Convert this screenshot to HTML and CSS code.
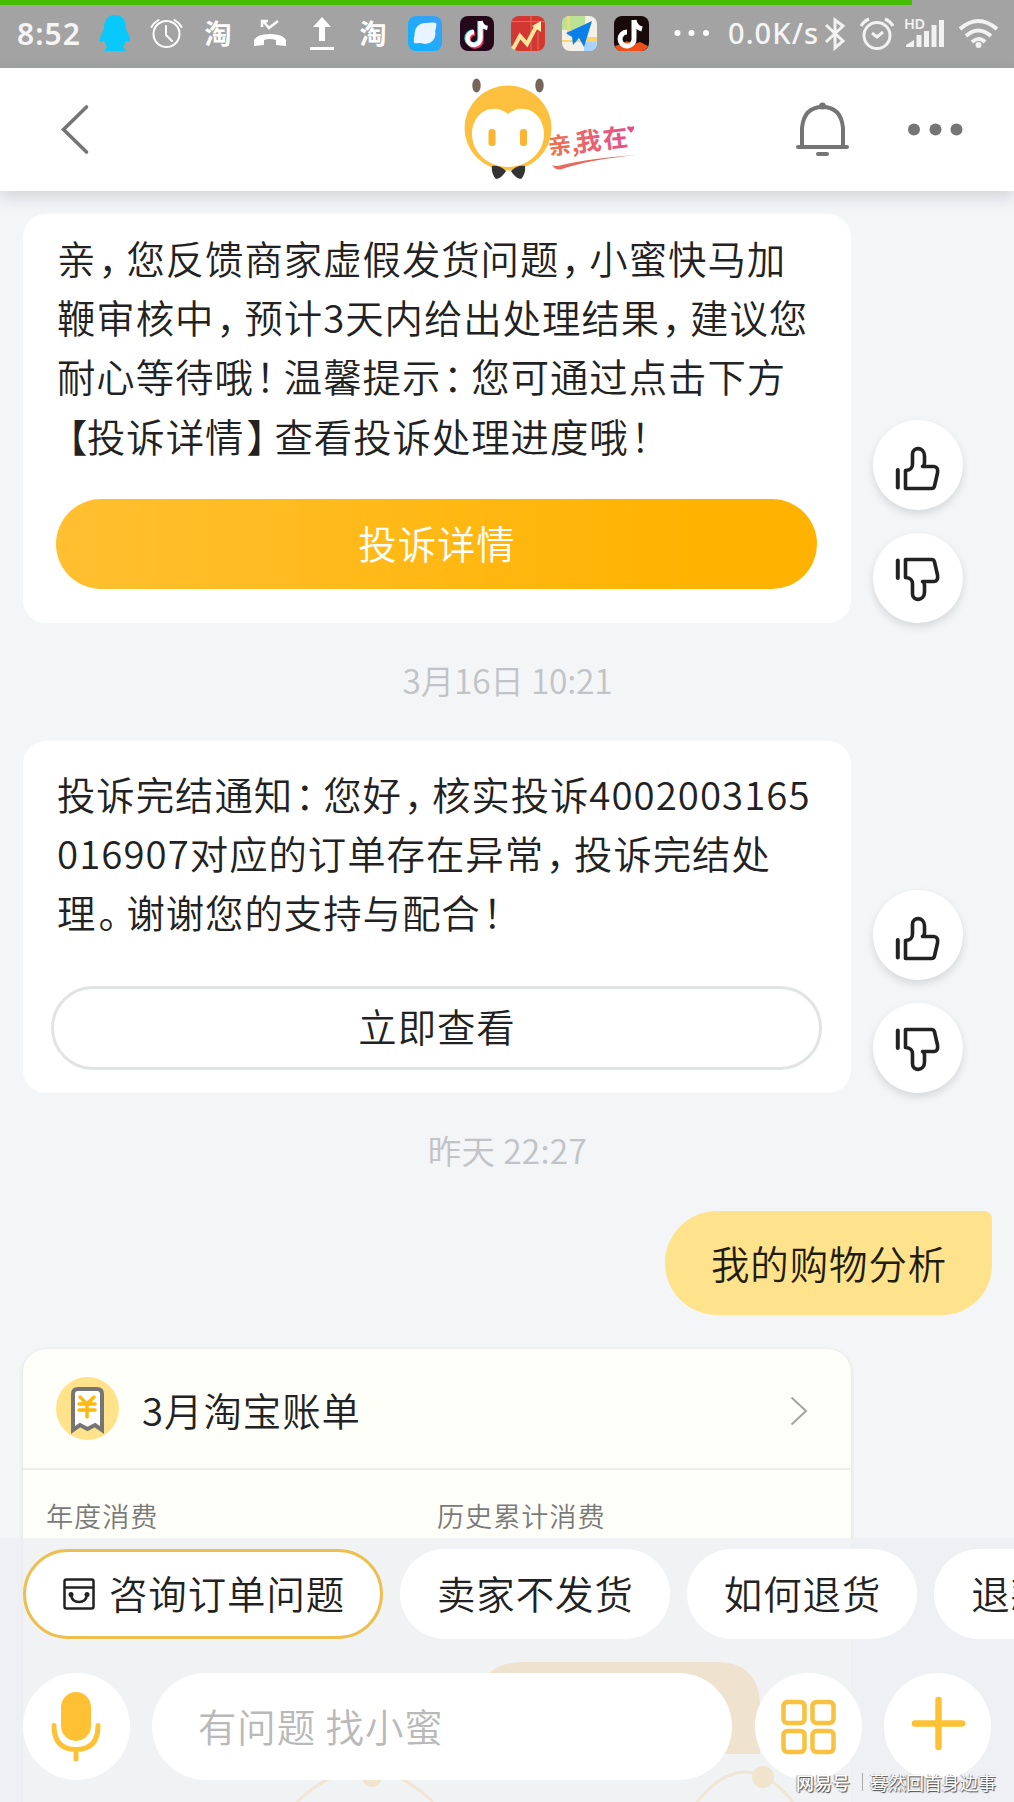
FILE: index.html
```html
<!DOCTYPE html>
<html lang="zh-CN">
<head>
<meta charset="utf-8">
<title>小蜜</title>
<link rel="stylesheet" href="styles.css">
</head>
<body>
<svg class="defs" width="0" height="0">
  <symbol id="thumb" viewBox="0 0 90 90">
    <path d="M24.800 50V67.500" stroke-width="4"/>
    <path d="M32.500 68.500V50.500C38 50 39.500 48 39.500 44V34C39.500 26.500 51.500 26.500 51.500 36V43Q51 46 49.500 46.500H61Q65.500 47 64.500 53L61.500 66Q61 68.500 58.500 68.500Z"/>
  </symbol>
</svg>
<div class="screen">
  <div class="status">
    <div class="progress"></div>
    <svg width="1014" height="68" viewBox="0 0 1014 68">
      <defs>
        <linearGradient id="blue" x1="1" y1="0" x2="0" y2="1"><stop offset="0" stop-color="#3d9ff5"/><stop offset="1" stop-color="#0bb3ff"/></linearGradient>
        <linearGradient id="slogan" x1="0" y1="0" x2="1" y2="0"><stop offset="0" stop-color="#ee7350"/><stop offset="1" stop-color="#e5508c"/></linearGradient>
      </defs>
      <text class="clock" x="17" y="45" textLength="63">8:52</text>
      <path fill="#09c8fb" d="M115 15c-8 0-11 6-11 13 0 4-5 8-4 14l4-1 3 6-3 4h22l-3-4 3-6 4 1c1-6-4-10-4-14 0-7-3-13-11-13z"/>
      <g fill="none" stroke="#fff" stroke-width="2" stroke-linecap="round">
        <circle cx="166.500" cy="34" r="13"/><path d="M166 26v9l6 6M151.500 27q2-4 7-7M181.500 27q-2-4-7-7"/>
      </g>
      <text class="tao" x="204.500" y="43.500">淘</text>
      <path fill="#fff" d="M254 46v-6q3-6 16-6t16 6v6l-10-1v-5q-6-2-12 0v5z"/>
      <path fill="none" stroke="#fff" stroke-width="2.500" d="M263 21l6 7 9-7M262 27v-6h6"/>
      <path fill="#fff" d="M322 17l9 10h-6v14h-6V27h-6zM310 47h24v3h-24z"/>
      <text class="tao" x="359.500" y="43.500">淘</text>
      <rect x="408" y="16" width="34" height="35" rx="8" fill="url(#blue)"/>
      <circle cx="425" cy="33.500" r="10.500" fill="#e8f4ff"/><path fill="#e8f4ff" d="M414 43q-1-3 1-9l11-11q8-1 10 0 1 2-1 9l-10 10q-8 2-11 1z"/>
      <rect x="460" y="16" width="34" height="35" rx="8" fill="#25091a"/>
      <g fill="none" stroke-width="4.500"><path stroke="#20d5d2" d="M479.500 21v16.500a6.500 6.500 0 1 1-6.500-6"/><path stroke="#ef3b66" d="M481.500 23v16.500a6.500 6.500 0 1 1-6.500-6"/><path stroke="#fff" d="M480.500 21v17a6.500 6.500 0 1 1-6.500-6M480.500 21q1 6 7 7"/></g>
      <rect x="511" y="16" width="34" height="35" rx="8" fill="#d23831"/>
      <path fill="none" stroke="#e56a51" d="M511 21.500h34M531 16v35M538 32v18"/>
      <path fill="none" stroke="#ffe49b" stroke-width="4" d="M513 49l7-13 7 8 10-19"/><path fill="#fff0b0" d="M532 26l9-5v11z"/>
      <rect x="562" y="16" width="35" height="35" rx="8" fill="#f4f2e8"/>
      <path fill="#b9e294" d="M570 16h15v8l-12 6h-11v-6q0-8 8-8z"/><path fill="#fbd56e" d="M567 16h3v20h-3zM562 40h22v-3h13v5h-35z"/><path fill="#a9d3ff" d="M584 42h13q0 9-8 9h-5z"/>
      <path fill="#0b7fe9" d="M566 33l26-12-8 26-5-9-6 7-1-8z"/>
      <rect x="614" y="16" width="35" height="35" rx="8" fill="#18090b"/>
      <path fill="#ee501c" d="M615 46l6-2 6-3 7 3 6-2 8 4q-2 5-7 5h-19q-6 0-7-5z"/>
      <path fill="none" stroke="#fff" stroke-width="5" d="M634 20v18a7 7 0 1 1-7-6M634 20q1 7 8 9"/>
      <g fill="#fff"><circle cx="677.500" cy="33" r="3"/><circle cx="691.500" cy="33" r="3"/><circle cx="706" cy="33" r="3"/></g>
      <text class="speed" x="728" y="44" textLength="90">0.0K/s</text>
      <g fill="none" stroke="#f2f2f2" stroke-width="3">
        <path d="M826 25l17 16-8 7V20l8 6-17 16"/>
        <circle cx="877" cy="35.500" r="13"/><path d="M872 33l5 4 6-5M861 26q3-5 8-7M893 26q-3-5-8-7"/>
      </g>
      <text class="hd" x="904" y="29" textLength="21">HD</text>
      <path fill="#f2f2f2" d="M906 47v-2l8-5v7zM916.500 35h5v12h-5zM924 31h5v16h-5zM931.500 25h5v22h-5zM939 20h5v27h-5z"/>
      <g fill="none" stroke="#f2f2f2" stroke-width="4"><path d="M960 29q18-16 37 0M966 36q12-11 25 0M972 42q7-6 13 0"/></g><circle cx="978.500" cy="45" r="3" fill="#f2f2f2"/>
    </svg>
  </div>
  <header class="header">
    <svg width="1014" height="123" viewBox="0 68 1014 123">
      <path d="M86.500 107L63.500 129.500L86.500 152" fill="none" stroke="#757575" stroke-width="3.600" stroke-linecap="round"/>
      <g fill="#75655b"><ellipse cx="476.500" cy="85.500" rx="4.200" ry="7"/><ellipse cx="539.500" cy="85.500" rx="4.200" ry="7"/></g>
      <ellipse cx="508" cy="128" rx="43.500" ry="42.500" fill="#fdc03e"/>
      <path fill="#fff" d="M508 114c-5-4-10-6-16-5-12 1-20 12-20 25 0 19 17 33 36 33s36-14 36-33c0-13-8-24-20-25-6-1-11 1-16 5z"/>
      <g fill="#fbb433"><rect x="488.500" y="129" width="7" height="17" rx="3"/><rect x="520" y="129" width="7" height="17" rx="3"/></g>
      <path fill="#333" d="M492 166q8-1 14 5-4 7-10 8-5-5-4-13zM525 166q-8-1-14 5 4 7 10 8 5-5 4-13z"/>
      <text class="slogan" fill="url(#slogan)" transform="rotate(-7 550 152)"><tspan x="549" y="155" font-size="23">亲,</tspan><tspan x="577" y="155" font-size="25">我</tspan><tspan x="604" y="155" font-size="25">在</tspan></text>
      <path fill="#e5508c" d="M631 133l-4-5q0-3 4-1 4-2 3 2z"/>
      <path fill="#e8685c" d="M552 165q4 2 10 0 30-7 76-10-46 4-76 14-6 2-10-4z"/>
      <g fill="none" stroke="#757575" stroke-width="4" stroke-linecap="round"><path d="M802 146V128q2-21 20.500-21t20.500 21v18M798 147h49M818 154h9"/></g><circle cx="822.500" cy="106" r="3.500" fill="#757575"/>
      <g fill="#757575"><circle cx="914" cy="129.500" r="6"/><circle cx="935.500" cy="129.500" r="6"/><circle cx="956.500" cy="129.500" r="6"/></g>
    </svg>
  </header>
  <main class="chat">
    <div class="row first">
      <section class="card">
        <p class="msg"><span>亲<i>，</i>您反馈商家虚假发货问题<i>，</i>小蜜快马加</span><span>鞭审核中<i>，</i>预计3天内给出处理结果<i>，</i>建议您</span><span>耐心等待哦<i>！</i>温馨提示<i>：</i>您可通过点击下方</span><span><b>【</b>投诉详情<i>】</i>查看投诉处理进度哦<i>！</i></span></p>
        <button class="btn primary">投诉详情</button>
      </section>
      <div class="votes">
        <button class="vote"><svg viewBox="0 0 90 90"><use href="#thumb"/></svg></button>
        <button class="vote down"><svg viewBox="0 0 90 90"><use href="#thumb"/></svg></button>
      </div>
    </div>
    <time class="time t1">3月16日 10:21</time>
    <div class="row second">
      <section class="card">
        <p class="msg"><span>投诉完结通知<i>：</i>您好<i>，</i>核实投诉<em>4002003165</em></span><span><em>016907</em>对应的订单存在异常<i>，</i>投诉完结处</span><span>理<i>。</i>谢谢您的支持与配合<i>！</i></span></p>
        <button class="btn outline">立即查看</button>
      </section>
      <div class="votes">
        <button class="vote"><svg viewBox="0 0 90 90"><use href="#thumb"/></svg></button>
        <button class="vote down"><svg viewBox="0 0 90 90"><use href="#thumb"/></svg></button>
      </div>
    </div>
    <time class="time t2">昨天 22:27</time>
    <div class="mine">我的购物分析</div>
    <section class="bill">
      <div class="bill-head">
        <svg width="63" height="63" viewBox="0 0 63 63"><circle cx="31.500" cy="31.500" r="31.500" fill="#ffe28a"/><path d="M17 53V17q0-5 5-5h19q5 0 5 5v36l-7-5-7.500 4-7.500-4z" fill="#fff" stroke="#757575" stroke-width="4"/><path d="M24 20l7 7 7-7M23 27h16M23 33h16M31 27v13" fill="none" stroke="#fdb913" stroke-width="3.500" stroke-linecap="round"/></svg>
        <span>3月淘宝账单</span>
        <svg class="arrow" width="18" height="30" viewBox="0 0 18 30"><path d="M1.500 1.500L16 15L1.500 28.500" fill="none" stroke="#a3a3a0" stroke-width="2"/></svg>
      </div>
      <div class="bill-cols"><span>年度消费</span><span>历史累计消费</span></div>
      <svg class="bill-art" width="828" height="264" viewBox="23 1538 828 264">
        <path d="M478 1754V1707q0-45 45-45H716q44 0 44 45v47z" fill="#f6b040"/>
        <g fill="none" stroke="#f6c15c" stroke-width="3"><path d="M297 1802Q365 1737 433 1802M697 1802Q745 1742 793 1802"/></g>
        <g fill="#f8b838"><circle cx="372" cy="1777" r="10"/><circle cx="763" cy="1777" r="11"/></g>
      </svg>
    </section>
  </main>
  <footer class="dock">
    <div class="chips">
      <button class="chip active"><svg width="32" height="32" viewBox="0 0 32 32"><g fill="none" stroke="#222" stroke-width="2.500" stroke-linecap="round"><rect x="1.500" y="1.500" width="29" height="29" rx="2"/><path d="M2 9.500h28M8 17q1 7 8 7t8-7"/></g><g fill="#222"><circle cx="8" cy="16.500" r="2.500"/><circle cx="24" cy="16.500" r="2.500"/></g></svg><span>咨询订单问题</span></button>
      <button class="chip"><span>卖家不发货</span></button>
      <button class="chip"><span>如何退货</span></button>
      <button class="chip"><span>退款</span></button>
    </div>
    <div class="bar">
      <button class="round"><svg viewBox="0 0 107 107"><rect x="38" y="19" width="30" height="49" rx="15" fill="#fec134"/><path d="M31 52.500q0 24 22 24t22-24M53 77v9" fill="none" stroke="#fec134" stroke-width="5" stroke-linecap="round"/></svg></button>
      <div class="input">有问题 找小蜜</div>
      <button class="round"><svg viewBox="0 0 107 107"><g fill="none" stroke="#f8c140" stroke-width="4.500"><rect x="28.500" y="29" width="21" height="21" rx="4"/><rect x="57.500" y="29" width="21" height="21" rx="4"/><rect x="28.500" y="58" width="21" height="21" rx="4"/><rect x="57.500" y="58" width="21" height="21" rx="4"/></g></svg></button>
      <button class="round"><svg viewBox="0 0 107 107"><path d="M31 50.500h47M54.500 27v47" stroke="#fec134" stroke-width="6.500" stroke-linecap="round"/></svg></button>
    </div>
  </footer>
  <div class="watermark"><strong>网易号</strong><span>蓦然回首身边事</span></div>
</div>
</body>
</html>
```

FILE: styles.css
```css
* { box-sizing: border-box; }
body { margin: 0; background: #f3f5f7; font-family: "Noto Sans CJK SC", sans-serif; font-weight: 350; color: #222; }
button { border: 0; padding: 0; margin: 0; font: inherit; color: inherit; background: #fff; }
svg { display: block; flex: none; }
.defs { position: absolute; }
.screen { position: relative; width: 1014px; height: 1802px; overflow: hidden; display: flex; flex-direction: column; }

.status { position: relative; height: 68px; flex: none; background: #a3a3a3; }
.progress { position: absolute; left: 0; top: 0; width: 912px; height: 5px; background: #44bd04; }
.clock { font: 600 30px "Noto Sans", sans-serif; fill: #f5f5f5; }
.tao { font: 700 27px "Noto Sans CJK SC", sans-serif; fill: #fff; }
.speed { font: 500 29px "Noto Sans", sans-serif; fill: #f5f5f5; }
.hd { font: 600 14.500px "Noto Sans", sans-serif; fill: #f2f2f2; }
.header { position: relative; z-index: 1; height: 123px; flex: none; background: #fff; box-shadow: 0 6px 16px rgba(30, 35, 45, .16); }
.slogan { font-weight: 700; font-family: "Noto Sans CJK SC", sans-serif; }

.chat { flex: 1; min-height: 0; overflow: hidden; padding: 23px 22px 0 23px; display: flex; flex-direction: column; }
.row { display: flex; gap: 22px; align-items: flex-end; flex: none; }
.card { width: 828px; background: #fff; border-radius: 23px; display: flex; flex-direction: column; }
.first .card { height: 409px; padding: 14px 34px 34px 33px; }
.second .card { height: 352px; padding: 23px 29px 23px 28px; }
.msg { margin: 0; padding-left: 1px; font-size: 38.400px; letter-spacing: .970px; line-height: 59.200px; }
.second .msg { padding-left: 6px; }
.msg span { display: block; white-space: nowrap; }
.msg i { font-style: normal; margin-left: 2px; letter-spacing: -10.400px; }
.msg b { font-weight: inherit; margin-left: -8px; letter-spacing: -.400px; }
.msg em { font-style: normal; letter-spacing: 1.050px; }
.btn { margin-top: auto; font-size: 38.400px; letter-spacing: .970px; line-height: 80px; padding: 0 0 5px 1px; border-radius: 46px; }
.primary { height: 90px; color: #fff; background: linear-gradient(90deg, #ffc031, #ffb300 85%); }
.outline { height: 84px; line-height: 73px; border: 3px solid #e2e3e5; }
.votes { display: flex; flex-direction: column; gap: 23px; }
.vote { width: 90px; height: 90px; border-radius: 50%; box-shadow: 0 4px 8px rgba(0, 0, 0, .12); }
.vote svg { fill: none; stroke: #222; stroke-width: 3.600px; stroke-linejoin: round; stroke-linecap: round; }
.down svg { transform: translateY(5px) scaleY(-1); }
.time { align-self: center; flex: none; color: #c1c3c6; font-size: 33.500px; line-height: 48px; }
.t1 { margin: 33px 0 37px; letter-spacing: -.2px; }
.t2 { margin: 33px 0 37px; letter-spacing: .3px; }
.mine { align-self: flex-end; flex: none; width: 327px; height: 104px; line-height: 102px; padding-left: 46px; font-size: 38.400px; letter-spacing: .970px; color: #211c0c; background: #ffe38c; border-radius: 52px 8px 50px 52px; }
.bill { width: 828px; height: 460px; margin-top: 34px; flex: none; background: #fffffa; border-radius: 23px 23px 0 0; box-shadow: 0 1px 4px rgba(0, 0, 0, .12); }
.bill-head { height: 121px; display: flex; align-items: center; padding: 0 43px 0 33px; border-bottom: 2px solid #eeeeea; font-size: 38.400px; letter-spacing: .970px; }
.bill-head span { flex: 1; margin-left: 23px; }
.arrow { margin-top: 4px; }
.bill-cols { display: grid; grid-template-columns: 391px 1fr; height: 68px; padding: 25px 24px 0 23px; line-height: 40px; font-size: 27.200px; letter-spacing: .900px; color: #7a7a78; }

.dock { position: absolute; inset: auto 0 0 0; height: 264px; padding: 11px 0 0 23px; background: rgba(237, 239, 242, .8); }
.chips { display: flex; gap: 17px; overflow: hidden; }
.chip { flex: none; height: 90px; padding: 0 36px 0 37px; border-radius: 45px; font-size: 38.400px; letter-spacing: .970px; display: flex; align-items: center; white-space: nowrap; }
.chip span { margin-top: -4px; }
.active { width: 360px; padding: 0 0 0 37px; border: 3px solid #edbf4f; gap: 14px; }
.bar { display: flex; margin-top: 34px; }
.round { width: 107px; height: 107px; border-radius: 50%; flex: none; }
.round + .round { margin-left: 22px; }
.input { width: 580px; height: 107px; margin: 0 23px 0 22px; padding-left: 46px; border-radius: 54px; background: #fff; line-height: 104px; font-size: 38.400px; letter-spacing: .970px; color: #b9b9b9; }
.watermark { position: absolute; right: 18px; bottom: 6px; display: flex; align-items: center; line-height: 28px; color: #fff; text-shadow: 1px 1px 1px #444, -1px 0 1px #999; }
.watermark strong { font-size: 18px; font-weight: 500; padding-right: 12px; border-right: 1px solid #aaa; line-height: 18px; }
.watermark span { font-size: 18px; margin-left: 7px; font-weight: 400; }
```
